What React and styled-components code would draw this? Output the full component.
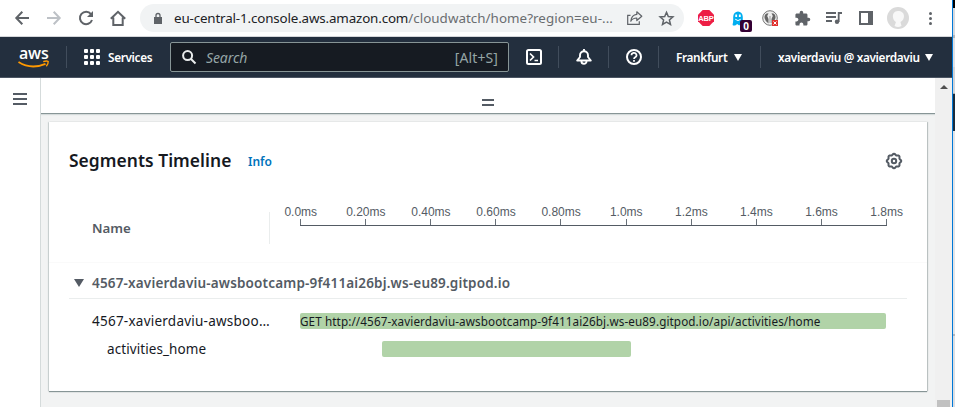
import React from "react";
import styled, { createGlobalStyle } from "styled-components";
import { MdExtension } from "react-icons/md";

const Global = createGlobalStyle`
  * { box-sizing: border-box; }
  body { margin: 0; overflow: hidden; background: #fff; }
  svg { display: block; flex: none; overflow: visible; }
`;

const Desktop = styled.div`
  display: grid;
  grid-template-columns: 952px 1px 2px;
  height: 407px;
  font-family: "Noto Sans", sans-serif;
`;
const Window = styled.div`
  display: flex;
  flex-direction: column;
  min-width: 0;
  height: 407px;
  overflow: hidden;
`;
const WindowEdge = styled.div`background: #0078d7;`;
const Behind = styled.div`display: flex; flex-direction: column;`;
const BehindPart = styled.div`
  height: ${(p) => p.$h}px;
  background: ${(p) => p.$c};
`;

const BrowserBar = styled.div`
  display: flex;
  align-items: center;
  height: 37px;
  flex: none;
  border-bottom: 1px solid #d5d7da;
  background: #fff;
`;
const IconSlot = styled.div`
  display: flex;
  align-items: center;
  justify-content: center;
  flex: none;
  width: ${(p) => p.$w}px;
  height: 28px;
  margin-left: ${(p) => p.$ml || 0}px;
  position: relative;
`;
const Omnibox = styled.div`
  display: flex;
  align-items: center;
  width: 544px;
  height: 28px;
  margin-left: 14px;
  padding-left: 14px;
  border-radius: 14px;
  background: #f1f3f4;
  flex: none;
`;
const Url = styled.div`
  width: 453px;
  margin-left: 12px;
  font-size: 13.4px;
  line-height: 20px;
  letter-spacing: 0.03px;
  color: #6a6d70;
  white-space: nowrap;
`;
const Host = styled.span`
  letter-spacing: -0.16px;
  color: #202124;
`;
const AbpLabel = styled.span`
  position: absolute;
  font: bold 7.5px "Liberation Sans", sans-serif;
  letter-spacing: -0.1px;
  color: #fff;
`;
const CountBadge = styled.span`
  position: absolute;
  left: 8px;
  top: 16px;
  width: 12px;
  height: 12px;
  border-radius: 2px;
  background: #330033;
  color: #fff;
  font: bold 10px/12px "Open Sans", sans-serif;
  text-align: center;
`;
const MenuDots = styled.div`
  display: grid;
  gap: 2px;
  margin-left: 20px;
`;
const MenuDot = styled.i`
  width: 3px;
  height: 3px;
  border-radius: 50%;
  background: #5f6368;
`;

const NavBar = styled.div`
  display: flex;
  align-items: center;
  flex: none;
  height: 41px;
  background: #232f3e;
  border-bottom: 1px solid #4b5563;
  color: #fff;
  font-size: 11.8px;
  font-weight: 600;
  white-space: nowrap;
`;
const AwsLogo = styled.div`
  display: flex;
  flex-direction: column;
  width: 32px;
  height: 22px;
  margin-left: 18px;
`;
const AwsWord = styled.div`
  height: 14px;
  padding-left: 1px;
  font: 600 16px/15px "Open Sans", sans-serif;
  letter-spacing: -0.2px;
`;
const Divider = styled.div`
  width: 1px;
  height: 22px;
  margin-left: ${(p) => p.$ml}px;
  background: #414d5c;
  flex: none;
`;
const AppsGrid = styled.div`
  display: grid;
  grid-template: repeat(3, 4px) / repeat(3, 4px);
  gap: 2px;
  margin-left: 17px;
`;
const AppDot = styled.i`background: #fff; border-radius: 1px;`;
const NavLabel = styled.div`
  width: ${(p) => p.$w}px;
  margin-left: ${(p) => p.$ml}px;
  letter-spacing: -0.34px;
  flex: none;
`;
const SearchBox = styled.div`
  display: flex;
  align-items: center;
  width: 339px;
  height: 30px;
  margin-left: 17px;
  padding: 0 10px 0 11px;
  border: 1px solid #879596;
  border-radius: 2px;
  background: #161b22;
  color: #95a5a6;
  font-size: 14px;
  font-weight: 400;
  flex: none;
`;
const Placeholder = styled.em`
  flex: 1;
  margin-left: 10px;
  letter-spacing: -0.1px;
`;
const Shortcut = styled.span`letter-spacing: 0.1px;`;
const Caret = styled.i`
  border: solid transparent;
  border-width: ${(p) => p.$half + 3}px ${(p) => p.$half}px 0;
  border-top-color: ${(p) => p.$c || "#fff"};
  flex: none;
`;

const Body = styled.div`
  display: grid;
  grid-template-columns: 40px 1px 894px 17px;
  flex: 1;
  min-height: 0;
`;
const SideRail = styled.div`
  display: flex;
  flex-direction: column;
  gap: 3px;
  padding: 15px 0 0 13px;
  background: #fff;
`;
const MenuLine = styled.i`width: 14px; height: 2px; background: #545b64;`;
const RailBorder = styled.div`background: #d5dbdb;`;
const Content = styled.div`
  display: flex;
  flex-direction: column;
  background: #f2f3f3;
`;
const SplitHandle = styled.div`
  display: flex;
  flex-direction: column;
  align-items: center;
  gap: 3px;
  height: 36px;
  flex: none;
  padding-top: 21px;
  background: #fff;
  border-bottom: 1px solid #879596;
  box-shadow: 0 1px 1px #d5dbdb;
`;
const HandleBar = styled.i`width: 12px; height: 2px; background: #545b64;`;
const Scrollbar = styled.div`
  display: flex;
  flex-direction: column;
  align-items: center;
  justify-content: space-between;
  background: #f0f0f0;
  padding-top: 7px;
`;
const ScrollArrow = styled.i`
  border: solid transparent;
  border-width: 0 4px 4px;
  border-bottom-color: #505050;
`;
const ScrollThumb = styled.i`width: 13px; height: 7px; background: #c1c1c1;`;

const Card = styled.section`
  width: 878px;
  height: 269px;
  margin: 8px 0 0 8px;
  background: #fff;
  box-shadow: 0 1px 1px #879596, 1px 0 1px #c4caca, -1px 0 1px #d5dbdb;
  flex: none;
`;
const CardHeader = styled.header`
  display: flex;
  align-items: center;
  height: 76px;
  padding: 0 25px 0 20px;
`;
const Title = styled.h2`
  margin: 0 0 1px;
  width: 179px;
  font-size: 17.4px;
  font-weight: 600;
  line-height: 24px;
  letter-spacing: 0.05px;
  color: #16191f;
  white-space: nowrap;
`;
const InfoLink = styled.a`
  flex: 1;
  padding-top: 2px;
  font-size: 12px;
  font-weight: 600;
  color: #0073bb;
`;
const Settings = styled.div`padding-top: 2px;`;
const TableHead = styled.div`
  display: flex;
  height: 65px;
  border-bottom: 1px solid #fafafa;
`;
const NameHead = styled.div`
  width: 221px;
  height: 32px;
  margin-top: 14px;
  padding-left: 43px;
  border-right: 1px solid #eaeded;
  font-size: 13.3px;
  font-weight: 600;
  line-height: 33px;
  color: #545b64;
`;
const Axis = styled.div`margin: 7px 0 0 30px;`;
const TickLabels = styled.div`
  display: grid;
  grid-template-columns: repeat(10, 65.1px);
  margin-left: -31.8px;
  font: 12px/14px "Liberation Sans", sans-serif;
  color: #545b64;
  text-align: center;
`;
const Ruler = styled.div`
  display: flex;
  justify-content: space-between;
  width: 587px;
  height: 7px;
  border-bottom: 1px solid #545b64;
`;
const Tick = styled.i`width: 1px; background: #687078;`;
const GroupRow = styled.div`
  display: flex;
  align-items: center;
  width: 838px;
  height: 36px;
  margin-left: 20px;
  padding: 5px 0 0 5px;
  border-bottom: 1px solid #eaeded;
`;
const GroupName = styled.div`
  margin-left: 8px;
  font-size: 13.5px;
  font-weight: 600;
  letter-spacing: 0.17px;
  color: #545b64;
  white-space: nowrap;
`;
const Rows = styled.div`padding-top: 8px;`;
const SegmentRow = styled.div`display: flex; align-items: center; height: 28px;`;
const SegmentName = styled.div`
  width: 251px;
  padding-left: ${(p) => p.$indent}px;
  font-size: 13.5px;
  letter-spacing: ${(p) => p.$spacing}px;
  color: #16191f;
  white-space: nowrap;
`;
const Bar = styled.div`
  width: ${(p) => p.$w}px;
  height: 16px;
  margin-left: ${(p) => p.$start}px;
  border-radius: 2px;
  background: #b1d3a8;
  font-size: 11.7px;
  letter-spacing: 0.1px;
  line-height: 16px;
  color: #16191f;
  white-space: nowrap;
`;

const Icon = ({ w = 16, h = w, color = "#5f6368", stroke = 2, children }) => (
  <svg width={w} height={h} viewBox={`0 0 ${w} ${h}`} fill="none" stroke={color} strokeWidth={stroke}>
    {children}
  </svg>
);

const TICKS = ["0.0ms", "0.20ms", "0.40ms", "0.60ms", "0.80ms", "1.0ms", "1.2ms", "1.4ms", "1.6ms", "1.8ms"];
const SEGMENTS = [
  {
    name: "4567-xavierdaviu-awsboo…",
    indent: 43,
    spacing: 0.24,
    start: 0,
    width: 586,
    label: "GET http://4567-xavierdaviu-awsbootcamp-9f411ai26bj.ws-eu89.gitpod.io/api/activities/home",
  },
  { name: "activities_home", indent: 58, spacing: 0.08, start: 82, width: 249, label: "" },
];
const BEHIND = [
  [8, "#000"], [27, "#d6d9de"], [3, "#b4b7bb"], [29, "#dfe1e5"], [26, "#d2d4d8"],
  [1, "#aaa"], [37, "#1b2c3c"], [203, "#e3e4e7"], [2, "#b4b6ba"], [71, "#dcdee2"],
];

const gearPath = (() => {
  const pts = [];
  for (let i = 0; i < 64; i++) {
    const a = (i / 64) * Math.PI * 2;
    const r = 6.6 + 0.65 * Math.cos(8 * a);
    pts.push(`${(8 + r * Math.cos(a)).toFixed(2)} ${(8 + r * Math.sin(a)).toFixed(2)}`);
  }
  return `M${pts.join("L")}Z`;
})();

function BrowserToolbar() {
  return (
    <BrowserBar>
      <IconSlot $w={14} $ml={15}>
        <Icon w={14}><path d="M14 7H1.5M7.3 .8L1.3 7l6 6.2" /></Icon>
      </IconSlot>
      <IconSlot $w={14} $ml={18}>
        <Icon w={14} color="#bdc1c6"><path d="M0 7h12.5M6.7 .8l6 6.2-6 6.2" /></Icon>
      </IconSlot>
      <IconSlot $w={16} $ml={17}>
        <Icon><path d="M13 4.1A6.2 6.2 0 1 0 14 10" /><path d="M15 1v6H9z" fill="#5f6368" stroke="none" /></Icon>
      </IconSlot>
      <IconSlot $w={16} $ml={16}>
        <Icon><path d="M.8 8.8L8 1.8l7.2 7M3.3 7.5V15h9.4V7.5" /></Icon>
      </IconSlot>
      <Omnibox>
        <Icon w={8} h={11} stroke={1.3}>
          <path d="M0 4h8v7H0z" fill="#5f6368" stroke="none" />
          <path d="M2 4V2.5a2 2 0 0 1 4 0V4" />
        </Icon>
        <Url><Host>eu-central-1.console.aws.amazon.com</Host>/cloudwatch/home?region=eu-...</Url>
        <Icon w={16} h={14} stroke={1.2}>
          <path d="M3.5 4.3H.7v9h11.6v-3" />
          <path d="M9.8.8l5 4.4-5 4.3V7C7 7 5 8 3.8 10.2 4.2 6.4 6.3 3.8 9.8 3.4z" strokeLinejoin="round" />
        </Icon>
        <IconSlot $w={15} $ml={16}>
          <Icon w={15} h={15} stroke={1.5}>
            <path d="M7.5 1.3l1.8 4.2 4.6.4-3.5 3 1.1 4.5-4-2.4-4 2.4 1.1-4.5-3.5-3 4.6-.4z" />
          </Icon>
        </IconSlot>
      </Omnibox>
      <IconSlot $w={16} $ml={14}>
        <Icon><path d="M4.7 0h6.6L16 4.7v6.6L11.3 16H4.7L0 11.3V4.7z" fill="#ed1e45" stroke="none" /></Icon>
        <AbpLabel>ABP</AbpLabel>
      </IconSlot>
      <IconSlot $w={12} $ml={18}>
        <Icon w={12} h={15}>
          <path d="M1 14.5c-1-1 .2-2 .2-5V6a4.8 5.5 0 0 1 9.6 0v8l-2-1-1.6 1.5-2-1.5-2 1.5z" fill="#00aef0" stroke="none" />
          <path d="M4.2 3.5v2.6M7.8 3.5v2.6" stroke="#fff" strokeWidth="1.8" />
          <path d="M3.2 8.2Q6 11 8.8 8.2" stroke="#fff" strokeWidth="1" />
        </Icon>
        <CountBadge>0</CountBadge>
      </IconSlot>
      <IconSlot $w={16} $ml={18}>
        <Icon>
          <circle cx="8" cy="8" r="7.3" fill="#eee" stroke="#777" strokeWidth="1" />
          <path d="M6.500 3.200q-4.500 0-4 4.800 1 4 4 5.500V9L5.200 6zM9.500 3.200q4.500 0 4 4.800-1 4-4 5.500V9l1.300-3z" fill="#666" stroke="none" />
          <path d="M8 6v7" stroke="#999" strokeWidth="1" />
          <path d="M10 10h6v6h-6z" fill="#e0302e" stroke="none" />
          <path d="M11.5 11.5l3 3m0-3l-3 3" stroke="#fff" strokeWidth="1" />
        </Icon>
      </IconSlot>
      <IconSlot $w={16} $ml={16}><MdExtension size={17} color="#5f6368" /></IconSlot>
      <IconSlot $w={16} $ml={16}>
        <Icon w={16} h={12}>
          <path d="M0 1h10M0 5h10M0 9h6M12.7 10V1H16" strokeWidth="1.8" />
          <circle cx="11" cy="9.8" r="2.2" fill="#5f6368" stroke="none" />
        </Icon>
      </IconSlot>
      <IconSlot $w={14} $ml={17}>
        <Icon w={14}>
          <path d="M1 1h12v12H1z" />
          <path d="M9 1h4v12H9z" fill="#5f6368" stroke="none" />
        </Icon>
      </IconSlot>
      <IconSlot $w={22} $ml={14}>
        <Icon w={22}>
          <circle cx="11" cy="11" r="11" fill="#dadada" stroke="none" />
          <path d="M11 4c-4 0-5.5 3-5 6.5.4 2.6 2 4 3 4.5L7.5 19q3.5 2 7 0l-1-4c2-1 3.5-3 3.5-6S14.5 4 11 4z" fill="#f8f8f8" stroke="none" />
        </Icon>
      </IconSlot>
      <MenuDots><MenuDot /><MenuDot /><MenuDot /></MenuDots>
    </BrowserBar>
  );
}

function ConsoleNav() {
  return (
    <NavBar>
      <AwsLogo>
        <AwsWord>aws</AwsWord>
        <Icon w={32} h={8} color="#ff9900" stroke={1.8}>
          <path d="M.5 2Q13 10 27.5 3.8" />
          <path d="M25.2 1.6q3.7-1.200 5 0 .2 2-1.900 4.700" strokeWidth="1.4" />
        </Icon>
      </AwsLogo>
      <Divider $ml={16} />
      <AppsGrid>{Array.from({ length: 9 }, (_, i) => <AppDot key={i} />)}</AppsGrid>
      <NavLabel $ml={8} $w={45}>Services</NavLabel>
      <SearchBox>
        <Icon w={14} color="#eaeded"><circle cx="5.6" cy="5.6" r="4.5" /><path d="M9 9l4.5 4.5" /></Icon>
        <Placeholder>Search</Placeholder>
        <Shortcut>[Alt+S]</Shortcut>
      </SearchBox>
      <IconSlot $w={16} $ml={17}>
        <Icon color="#fff">
          <rect x="1" y="1" width="14" height="14" rx="1.5" />
          <path d="M4 4.5L7.5 8 4 11.5M8.5 11.5H12" strokeWidth="1.7" />
        </Icon>
      </IconSlot>
      <Divider $ml={16} />
      <IconSlot $w={16} $ml={17}>
        <Icon color="#fff">
          <path d="M8 0v2M1.2 11.5h13.6L12 8V6.2a4 4 0 0 0-8 0V8zM5.5 12.5a2.500 2.300 0 0 0 5 0" strokeWidth="1.9" strokeLinejoin="round" />
        </Icon>
      </IconSlot>
      <Divider $ml={16} />
      <IconSlot $w={16} $ml={17}>
        <Icon color="#fff">
          <circle cx="8" cy="8" r="7" />
          <path d="M5.5 6.300a2.500 2.300 0 1 1 3.700 1.900Q8 8.900 8 10M8 11v1.700" strokeWidth="1.7" />
        </Icon>
      </IconSlot>
      <Divider $ml={16} />
      <NavLabel $ml={17} $w={58}>Frankfurt</NavLabel>
      <Caret $half={4} />
      <Divider $ml={18} />
      <NavLabel $ml={17} $w={147}>xavierdaviu @ xavierdaviu</NavLabel>
      <Caret $half={4} />
    </NavBar>
  );
}

function SegmentsCard() {
  return (
    <Card>
      <CardHeader>
        <Title>Segments Timeline</Title>
        <InfoLink>Info</InfoLink>
        <Settings>
          <Icon color="#545b64"><path d={gearPath} /><circle cx="8" cy="8" r="2.2" /></Icon>
        </Settings>
      </CardHeader>
      <TableHead>
        <NameHead>Name</NameHead>
        <Axis>
          <TickLabels>{TICKS.map((t) => <span key={t}>{t}</span>)}</TickLabels>
          <Ruler>{TICKS.map((t) => <Tick key={t} />)}</Ruler>
        </Axis>
      </TableHead>
      <GroupRow>
        <Caret $half={5} $c="#545b64" />
        <GroupName>4567-xavierdaviu-awsbootcamp-9f411ai26bj.ws-eu89.gitpod.io</GroupName>
      </GroupRow>
      <Rows>
        {SEGMENTS.map((s) => (
          <SegmentRow key={s.name}>
            <SegmentName $indent={s.indent} $spacing={s.spacing}>{s.name}</SegmentName>
            <Bar $w={s.width} $start={s.start}>{s.label}</Bar>
          </SegmentRow>
        ))}
      </Rows>
    </Card>
  );
}

export default function App() {
  return (
    <Desktop>
      <Global />
      <Window>
        <BrowserToolbar />
        <ConsoleNav />
        <Body>
          <SideRail><MenuLine /><MenuLine /><MenuLine /></SideRail>
          <RailBorder />
          <Content>
            <SplitHandle><HandleBar /><HandleBar /></SplitHandle>
            <SegmentsCard />
          </Content>
          <Scrollbar><ScrollArrow /><ScrollThumb /></Scrollbar>
        </Body>
      </Window>
      <WindowEdge />
      <Behind>{BEHIND.map(([h, c], i) => <BehindPart key={i} $h={h} $c={c} />)}</Behind>
    </Desktop>
  );
}
